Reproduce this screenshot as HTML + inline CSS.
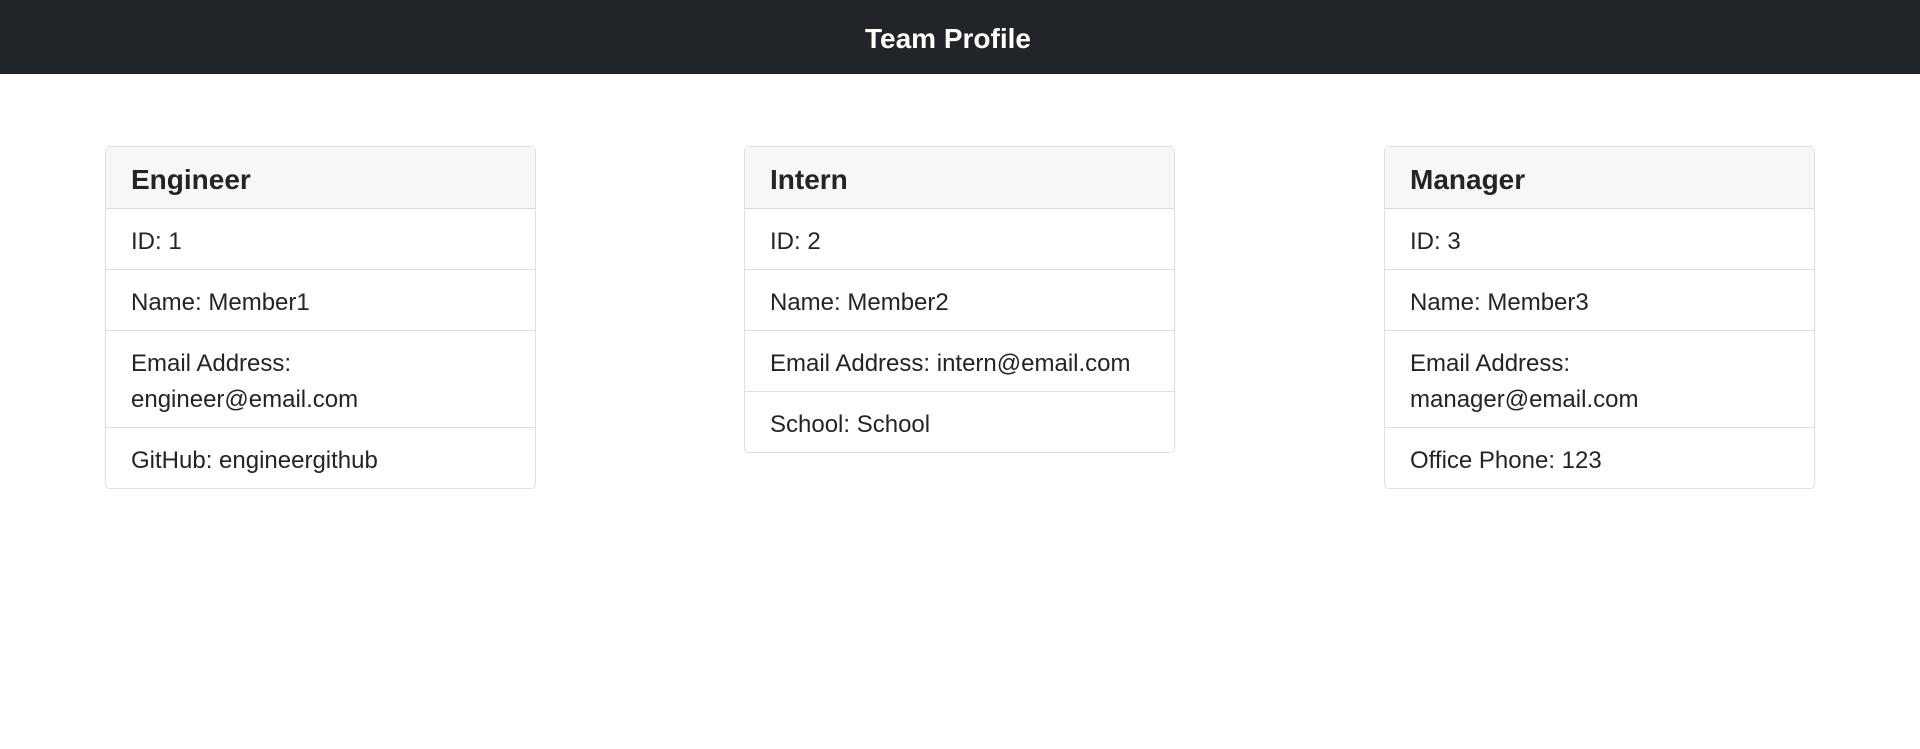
<!DOCTYPE html>
<html><head><meta charset="utf-8"><style>
*{box-sizing:border-box;margin:0;padding:0}
body{width:1920px;height:749px;background:#fff;font-family:"Liberation Sans",sans-serif;color:#212529;position:relative;overflow:hidden}
.nav{height:74px;background:#212529;color:#fff;text-align:center;font-weight:bold;font-size:28px;line-height:78px;padding-right:24px}
.card{position:absolute;top:146px;width:431px;border:1px solid rgba(0,0,0,.125);border-radius:5px;overflow:hidden}
.hd{background:#f7f7f7;border-bottom:1px solid rgba(0,0,0,.125);height:62px;padding:0 25px;font-size:28px;font-weight:bold;line-height:66px;color:#212529}
.it{padding:15px 25px 9px;font-size:24px;line-height:36px;border-bottom:1px solid rgba(0,0,0,.125)}
.it:last-child{border-bottom:0}
</style></head><body>
<div class="nav">Team Profile</div>
<div class="card" style="left:105px"><div class="hd">Engineer</div>
<div class="it">ID: 1</div><div class="it">Name: Member1</div><div class="it">Email Address:<br>engineer@email.com</div><div class="it">GitHub: engineergithub</div></div>
<div class="card" style="left:744px"><div class="hd">Intern</div>
<div class="it">ID: 2</div><div class="it">Name: Member2</div><div class="it">Email Address: intern@email.com</div><div class="it">School: School</div></div>
<div class="card" style="left:1384px"><div class="hd">Manager</div>
<div class="it">ID: 3</div><div class="it">Name: Member3</div><div class="it">Email Address:<br>manager@email.com</div><div class="it">Office Phone: 123</div></div>
</body></html>
